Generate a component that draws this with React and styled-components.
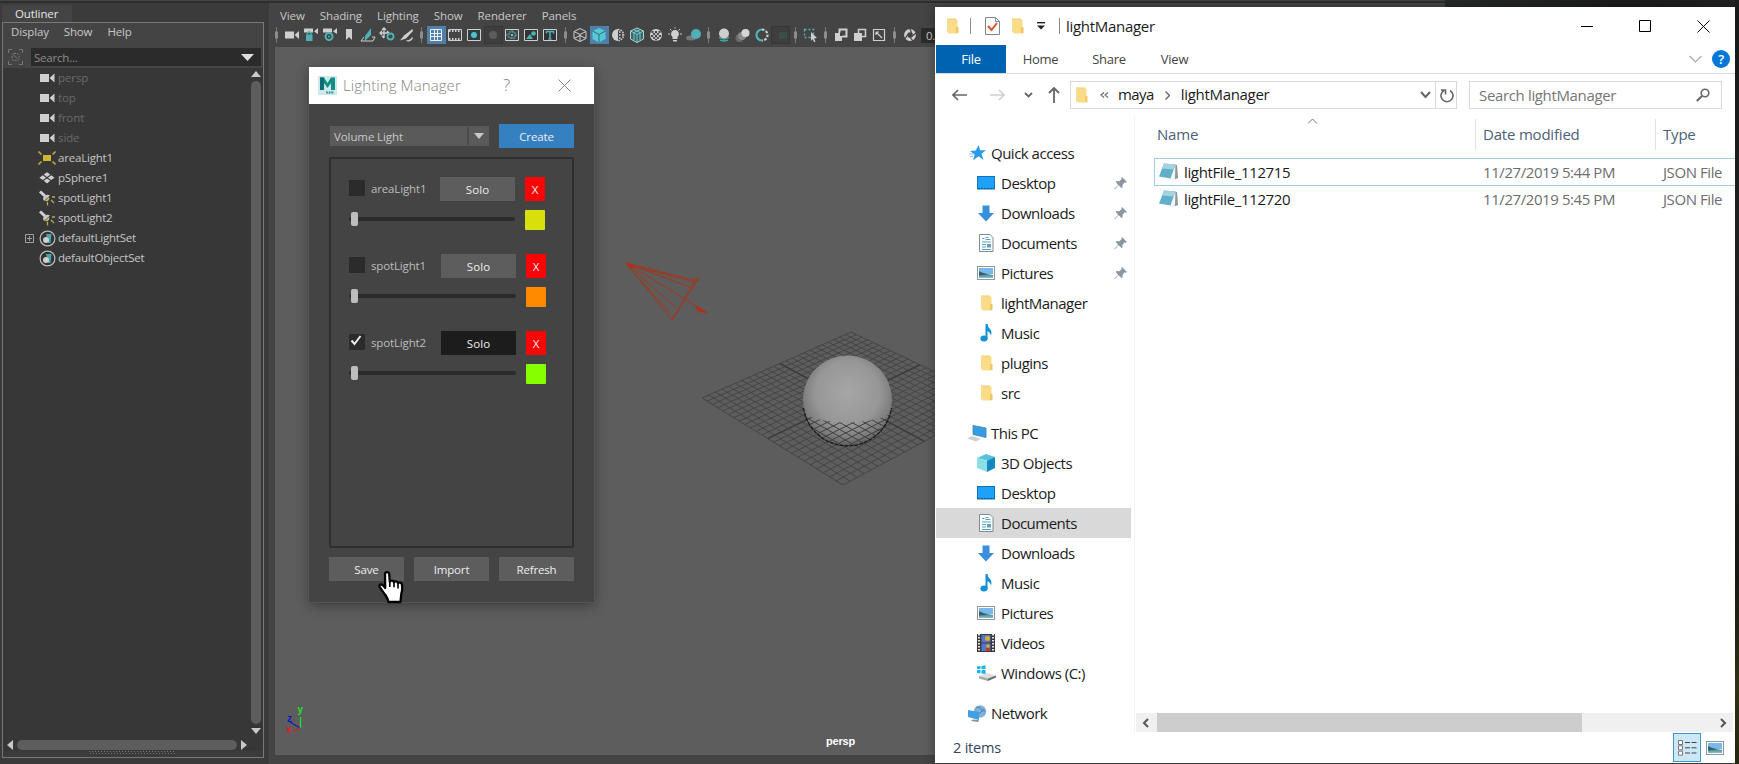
import React from "react";
import styled, { createGlobalStyle, css } from "styled-components";

const GlobalStyle = createGlobalStyle`
  * { box-sizing: border-box; }
  body { margin: 0; background: #3b3b3b; overflow: hidden; }
  svg { display: block; flex: none; }
`;

const Desktop = styled.div`
  position: relative;
  width: 1739px;
  height: 764px;
  display: flex;
  flex-direction: column;
  overflow: hidden;
  background: #3b3b3b;
  color: #c8c8c8;
  font: 11.5px/16px "Open Sans", "Noto Sans", sans-serif;
  letter-spacing: -0.3px;
  white-space: nowrap;
`;
const TopEdge = styled.div`
  height: 3px;
  flex: none;
  background: #444;
  border-bottom: 2px solid #2e2e2e;
`;
const Workspace = styled.div`
  flex: 1;
  display: flex;
  gap: 5px;
  min-height: 0;
`;

/* ---------- Outliner ---------- */
const OutlinerDock = styled.div`
  width: 264px;
  padding: 2px 0 6px 2px;
  display: flex;
  flex-direction: column;
`;
const DockTab = styled.div`
  width: 70px;
  height: 17px;
  padding-left: 13px;
  background: #444;
  color: #e6e6e6;
  line-height: 18px;
  letter-spacing: -0.1px;
`;
const OutlinerPanel = styled.div`
  flex: 1;
  display: flex;
  flex-direction: column;
  border: 1px solid #787878;
  background: #373737;
  min-height: 0;
`;
const OutlinerHead = styled.div`
  background: #444;
  height: 45px;
`;
const OutlinerMenus = styled.div`
  display: flex;
  gap: 15px;
  padding: 1px 0 0 8px;
  height: 25px;
  letter-spacing: -0.15px;
`;
const SearchLine = styled.div`
  display: flex;
  align-items: center;
  gap: 8px;
  padding-left: 5px;
`;
const SearchField = styled.div`
  width: 230px;
  height: 18px;
  padding: 0 7px 0 3px;
  display: flex;
  align-items: center;
  justify-content: space-between;
  background: #2b2b2b;
  color: #8c8c8c;
  letter-spacing: -0.2px;
`;
const SearchHint = styled.span`
  padding-top: 2px;
`;
const OutlinerBody = styled.div`
  flex: 1;
  display: flex;
  min-height: 0;
`;
const Tree = styled.div`
  flex: 1;
`;
const TreeRow = styled.div`
  height: 20px;
  display: flex;
  align-items: center;
  padding-left: 22px;
  color: ${(p) => (p.$dim ? "#6a6a6a" : "#c6c6c6")};
  letter-spacing: ${(p) => (p.$dim ? "-0.1px" : "-0.2px")};
`;
const Expander = styled.div`
  width: 12px;
`;
const TreeIcon = styled.div`
  width: 20px;
  margin-right: 1px;
  display: flex;
  justify-content: center;
`;
const VBar = styled.div`
  width: 12px;
  display: flex;
  flex-direction: column;
  align-items: center;
  padding: 3px 2px 4px 0;
  gap: 4px;
`;
const VThumb = styled.div`
  flex: 1;
  width: 10px;
  border-radius: 5px;
  background: #5d5d5d;
`;
const HBar = styled.div`
  height: 13px;
  display: flex;
  align-items: center;
  gap: 4px;
  padding-left: 4px;
`;
const HThumb = styled.div`
  width: 220px;
  height: 10px;
  border-radius: 5px;
  background: #5d5d5d;
`;
const Grip = styled.div`
  height: 6px;
  background: #3b3b3b;
  display: flex;
  justify-content: center;
  padding-right: 2px;
`;

/* ---------- Viewport ---------- */
const ViewPanel = styled.div`
  flex: 1;
  display: flex;
  flex-direction: column;
  background: #444;
  border-top: 1px solid #484848;
`;
const ViewMenus = styled.div`
  height: 21px;
  display: flex;
  gap: 15px;
  padding: 4px 0 0 11px;
  letter-spacing: -0.1px;
`;
const Toolbar = styled.div`
  height: 22px;
  display: flex;
  align-items: center;
  padding: 0 0 2px 2px;
`;
const Tool = styled.div`
  width: 19px;
  height: 18px;
  display: flex;
  align-items: center;
  justify-content: center;
  ${(p) => p.$on && css`background: #4f80aa;`}
  ${(p) => p.$off && css`background: #3e3e3e; border: 1px solid #363636;`}
`;
const ToolSep = styled.div`
  width: ${(p) => p.$w || 11}px;
  display: flex;
  justify-content: center;
`;
const NumField = styled.div`
  width: 40px;
  height: 15px;
  margin-left: 2px;
  padding-left: 5px;
  line-height: 15px;
  background: #2b2b2b;
`;
const Canvas = styled.div`
  flex: 1;
  margin: 0 0 9px 6px;
  background: #5d5d5d;
`;

/* ---------- Lighting manager dialog ---------- */
const Dialog = styled.div`
  position: absolute;
  left: 309px;
  top: 67px;
  width: 285px;
  height: 535px;
  display: flex;
  flex-direction: column;
  background: #444;
  box-shadow: 0 0 0 1px #555, 0 3px 12px rgba(0, 0, 0, 0.4);
`;
const DialogTitle = styled.div`
  height: 37px;
  display: flex;
  align-items: center;
  padding-left: 9px;
  background: #fff;
  color: #858585;
  font-size: 15px;
  font-weight: 300;
`;
const TitleText = styled.div`
  width: 158px;
  margin-left: 6px;
  padding-bottom: 1px;
  letter-spacing: 0.1px;
`;
const TitleHelp = styled.div`
  width: 55px;
  font-size: 17px;
  margin-left: 2px;
  padding-bottom: 1px;
`;
const DialogBody = styled.div`
  flex: 1;
  padding: 20px 20px 0;
  display: flex;
  flex-direction: column;
`;
const CreateLine = styled.div`
  display: flex;
  align-items: center;
  justify-content: space-between;
  padding-left: 1px;
`;
const Combo = styled.div`
  width: 159px;
  height: 20px;
  display: flex;
  align-items: center;
  background: #5a5a5a;
  letter-spacing: 0;
`;
const ComboText = styled.div`
  width: 139px;
  padding: 2px 0 0 4px;
  border-right: 2px solid #4a4a4a;
  letter-spacing: -0.1px;
`;
const ComboArrow = styled.div`
  flex: 1;
  display: flex;
  justify-content: center;
`;
const Button = styled.div`
  width: ${(p) => p.$w || 75}px;
  height: 24px;
  display: flex;
  align-items: center;
  justify-content: center;
  padding-top: 2px;
  background: ${(p) => p.$bg || "#5d5d5d"};
  color: #eee;
  letter-spacing: ${(p) => p.$ls || "-0.15px"};
`;
const LightBox = styled.div`
  height: 391px;
  margin-top: 9px;
  padding: 18px 0 0 18px;
  display: flex;
  flex-direction: column;
  gap: 24px;
  border: 2px solid #2f2f2f;
  border-radius: 2px;
`;
const LightItem = styled.div`
  display: grid;
  grid-template-columns: ${(p) => (p.$wide ? 92 : 91)}px 75px 20px;
  column-gap: 0;
  row-gap: 9px;
  align-items: center;
`;
const LightLabel = styled.div`
  display: flex;
  align-items: center;
  gap: 6px;
  color: #bdbdbd;
  letter-spacing: -0.15px;
`;
const CheckBox = styled.div`
  width: 16px;
  height: 16px;
  margin-top: -2px;
  padding: 1px 0 0 1px;
  background: #2b2b2b;
`;
const DeleteCell = styled.div`
  padding-left: 10px;
`;
const SliderCell = styled.div`
  grid-column: 1 / 3;
  display: flex;
  align-items: center;
  height: 4px;
  border-radius: 2px;
  margin-top: -2px;
  background: #2b2b2b;
`;
const SliderHandle = styled.div`
  width: 7px;
  height: 14px;
  margin-left: 2px;
  border-radius: 2px;
  background: #bdbdbd;
`;
const Swatch = styled.div`
  width: 20px;
  height: 20px;
  border-radius: 1px;
  background: ${(p) => p.$c};
`;
const DialogButtons = styled.div`
  display: flex;
  gap: 10px;
  margin-top: 9px;
`;
const Cursor = styled.div`
  position: absolute;
  left: 378px;
  top: 570px;
`;

/* ---------- Wallpaper slivers ---------- */
const WallTop = styled.div`
  position: absolute;
  left: 1445px;
  top: 0;
  width: 294px;
  height: 7px;
  background: linear-gradient(90deg, #262a2c, #1c1c1c 60%, #232323);
`;
const WallSide = styled.div`
  position: absolute;
  left: 1735px;
  top: 0;
  width: 4px;
  height: 764px;
  background: linear-gradient(#1d1d1d, #262626 45%, #1c1c14 75%, #39371a 90%, #2a2a12);
`;

/* ---------- Explorer ---------- */
const Explorer = styled.div`
  position: absolute;
  left: 935px;
  top: 7px;
  width: 800px;
  height: 756px;
  display: flex;
  flex-direction: column;
  background: #fff;
  color: #1b1b1b;
  font-size: 15px;
  line-height: 20px;
  letter-spacing: -0.4px;
  box-shadow: 0 0 10px rgba(0, 0, 0, 0.35);
`;
const TitleBar = styled.div`
  height: 38px;
  display: flex;
  align-items: center;
  padding: 0 25px 0 11px;
`;
const TitleDivider = styled.div`
  width: 1px;
  height: 16px;
  margin: 0 ${(p) => p.$r}px 0 ${(p) => p.$l}px;
  background: #8a8a8a;
`;
const TitleName = styled.div`
  flex: 1;
  letter-spacing: -0.3px;
`;
const WinControls = styled.div`
  display: flex;
  align-items: center;
  gap: 46px;
`;
const Ribbon = styled.div`
  height: 29px;
  display: flex;
  align-items: center;
  padding: 0 5px 0 1px;
  border-bottom: 1px solid #d9dadb;
  font-size: 13px;
  color: #444;
  letter-spacing: -0.25px;
`;
const RibbonTab = styled.div`
  width: ${(p) => p.$w}px;
  height: 28px;
  line-height: 28px;
  text-align: center;
  ${(p) => p.$file && css`background: #0063b1; color: #fff;`}
`;
const RibbonRight = styled.div`
  margin-left: auto;
  display: flex;
  align-items: center;
  gap: 10px;
`;
const HelpDot = styled.div`
  width: 18px;
  height: 18px;
  border-radius: 50%;
  background: #0078d7;
  color: #fff;
  text-align: center;
  line-height: 18px;
  font-weight: 600;
`;
const AddressLine = styled.div`
  height: 42px;
  display: flex;
  align-items: center;
  padding: 0 13px 0 17px;
`;
const NavArrows = styled.div`
  width: 118px;
  display: flex;
  align-items: center;
`;
const Gap = styled.div`
  width: ${(p) => p.$w}px;
`;
const AddressBox = styled.div`
  width: 387px;
  height: 28px;
  display: flex;
  align-items: center;
  border: 1px solid #d9d9d9;
  padding-left: 4px;
`;
const Crumb = styled.div`
  margin-left: ${(p) => p.$l}px;
  padding-bottom: ${(p) => (p.$up ? 2 : 0)}px;
  letter-spacing: ${(p) => p.$ls || "-0.3px"};
`;
const AddressEnd = styled.div`
  margin-left: auto;
  height: 26px;
  display: flex;
  align-items: center;
`;
const RefreshCell = styled.div`
  width: 21px;
  height: 26px;
  margin-left: 4px;
  display: flex;
  align-items: center;
  justify-content: flex-end;
  padding-right: 2px;
  border-left: 1px solid #d9d9d9;
`;
const SearchBox = styled.div`
  width: 253px;
  height: 28px;
  margin-left: 12px;
  padding: 0 11px 0 9px;
  display: flex;
  align-items: center;
  justify-content: space-between;
  border: 1px solid #d9d9d9;
  color: #767676;
  letter-spacing: -0.35px;
`;
const Panes = styled.div`
  flex: 1;
  display: flex;
  min-height: 0;
`;
const NavPane = styled.div`
  width: 200px;
  padding: 22px 3px 0 1px;
  border-right: 1px solid #f3f3f3;
`;
const NavRow = styled.div`
  height: 30px;
  display: flex;
  align-items: center;
  gap: ${(p) => (p.$root ? 4 : 5)}px;
  padding-left: ${(p) => (p.$root ? 31 : 40)}px;
  margin-top: ${(p) => (p.$gap ? 10 : 0)}px;
  background: ${(p) => (p.$sel ? "#d9d9d9" : "none")};
  letter-spacing: -0.5px;
`;
const NavIcon = styled.div`
  width: 20px;
  display: flex;
  justify-content: center;
`;
const NavLabel = styled.div`
  flex: 1;
`;
const PinSlot = styled.div`
  width: 17px;
`;
const ListPane = styled.div`
  flex: 1;
  display: flex;
  flex-direction: column;
  padding-left: 1px;
`;
const ColumnHeads = styled.div`
  height: 42px;
  display: grid;
  grid-template-columns: 340px 180px 78px;
  color: #4c607a;
  letter-spacing: -0.2px;
`;
const ColumnHead = styled.div`
  height: 31px;
  margin-top: 3px;
  padding: 5px 0 0 ${(p) => p.$l}px;
  border-right: ${(p) => (p.$last ? "none" : "1px solid #e2e2e2")};
`;
const HeadName = styled(ColumnHead)`
  position: relative;
`;
const SortMark = styled.div`
  position: absolute;
  left: 171px;
  top: -1px;
`;
const FileRow = styled.div`
  height: ${(p) => (p.$sel ? 28 : 27)}px;
  margin-left: 18px;
  display: grid;
  grid-template-columns: 25px 299px 180px 70px;
  align-items: center;
  border: 1px solid ${(p) => (p.$sel ? "#9fcde3" : "transparent")};
  border-right: none;
  padding-left: 4px;
  font-size: 15px;
  letter-spacing: -0.36px;
  margin-top: ${(p) => (p.$sel ? 0 : -1)}px;
`;
const FileMeta = styled.div`
  color: #6d6d6d;
  letter-spacing: -0.42px;
`;
const ListFill = styled.div`
  flex: 1;
`;
const ScrollTrack = styled.div`
  height: 19px;
  margin: 0 2px 1px 0;
  display: flex;
  align-items: center;
  justify-content: space-between;
  background: #f0f0f0;
  padding: 0 6px 0 6px;
`;
const ScrollLeft = styled.div`
  display: flex;
  align-items: center;
  gap: 8px;
`;
const ScrollThumb = styled.div`
  width: 425px;
  height: 19px;
  background: #cdcdcd;
`;
const StatusBar = styled.div`
  height: 30px;
  display: flex;
  align-items: center;
  justify-content: space-between;
  padding: 0 11px 1px 18px;
  color: #30475f;
  font-size: 14.5px;
  letter-spacing: -0.2px;
`;
const ViewButtons = styled.div`
  display: flex;
  align-items: center;
  gap: 5px;
`;
const DetailsButton = styled.div`
  width: 28px;
  height: 29px;
  display: flex;
  align-items: center;
  justify-content: center;
  border: 1px solid #3c99c4;
  background: #cce8f6;
`;

/* ---------- Icons ---------- */
const G = "#cfcfcf";
const T = "#4fb0b5";

const Tri = ({ d, w, h, c = "#c8c8c8" }) => (
  <svg width={w} height={h}><path d={d} fill={c} /></svg>
);
const CameraGlyph = () => (
  <svg width="15" height="10"><path d="M0 1h9v8H0z M14.5 0.5v9l-5-4.5z" fill={G} /></svg>
);
const AreaGlyph = () => (
  <svg width="18" height="14" viewBox="0 0 18 14">
    <rect x="5" y="4" width="8" height="6" fill="#cdb832" />
    <path d="M0.5 0.5l3 3M17.5 0.5l-3 3M0.5 13.5l3-3M17.5 13.5l-3-3" stroke="#b8a840" strokeWidth="1.6" />
  </svg>
);
const MeshGlyph = () => (
  <svg width="16" height="12" viewBox="0 0 16 12" fill="#cfcfcf">
    <path d="M8 0.2l3.3 2.4L8 5 4.700 2.600z M3.800 3.300l3.300 2.400-3.300 2.400L.4 5.700z M12.200 3.300l3.300 2.400-3.300 2.400-3.300-2.400z M8 6.400l3.300 2.400L8 11.500 4.700 8.800z" />
  </svg>
);
const SpotGlyph = () => (
  <svg width="17" height="16" viewBox="0 0 17 16">
    <path d="M1 1.500l5 4.500" stroke="#d2d2d2" strokeWidth="3" />
    <path d="M5 11L11 5.500a4.500 4.500 0 0 0-5 0 4 4 0 0 0-1 5.500z" fill="#c9c9c9" />
    <path d="M10 7a3 3 0 0 1-4 4z" fill="#cfc060" />
    <path d="M13 7h3M12 10l3 3M8.500 12v3.500" stroke="#b5a860" strokeWidth="1.300" />
  </svg>
);
const SetGlyph = () => (
  <svg width="17" height="17" viewBox="0 0 17 17">
    <circle cx="8.500" cy="8.500" r="7.400" fill="#333" stroke="#bcbcbc" strokeWidth="1.200" />
    <path d="M7 4h5.500l-1 9H9z" fill="#45a5ad" />
    <circle cx="7" cy="10" r="3" fill="#cfcfcf" />
  </svg>
);
const PlusBox = () => (
  <svg width="9" height="9"><path d="M.5.5h8v8h-8z M2 4.500h5M4.500 2v5" fill="none" stroke="#a0a0a0" /></svg>
);
const FilterGlyph = () => (
  <svg width="15" height="16" viewBox="0 0 15 16" fill="none" stroke="#777">
    <path d="M.5 4V.500H4M11 .500h3.500V4M.5 12v3.500H4M11 15.500h3.500V12" />
    <rect x="4" y="4.500" width="7" height="7" rx="2" strokeDasharray="2 1" />
    <path d="M5.500 6l4 4" />
  </svg>
);
const SepGlyph = () => (
  <svg width="3" height="16"><path d="M1.500 0v16" stroke="#777" /><path d="M0 4.500h3v7H0z" fill="#8c8c8c" /></svg>
);
const toolArt = {
  cam: <path d="M1 4.500h9v7H1z M15 4v8l-4.500-4z" fill={G} />,
  camLock: <g><path d="M1 1.500h9v4H1z M15 1v6l-4-2.500z" fill={G} /><rect x="3" y="7.500" width="6.500" height="6.500" fill={T} /><path d="M4.500 7.500V6q1.700-2.500 3.500 0v1.500" fill="none" stroke={T} strokeWidth="1.500" /></g>,
  camGear: <g><path d="M1 1.500h9v4H1z M15 1v6l-4-2.500z" fill={G} /><circle cx="7" cy="9.500" r="3.500" fill="#444" stroke={T} strokeWidth="2" /><circle cx="7" cy="9.500" r="1" fill={T} /></g>,
  mark: <path d="M5 2h6v11L8 10l-3 3z" fill={G} />,
  plane: <g><path d="M5 9l6-8v7l-6 6z" fill={T} /><path d="M1 14l3-4M1 14h12l2-4h-3" stroke={G} fill="none" /></g>,
  pan: <g><path d="M5 1v10M1 6h9M3 3l2-2 2 2M3 9l2 2M3 4L1 6l2 2M8 4l2 2" stroke={G} fill="none" strokeWidth="1.300" /><circle cx="11.500" cy="9.500" r="3" stroke={T} strokeWidth="1.800" fill="none" /></g>,
  brush: <g><path d="M14.500 2L6 8.500 2 13.500l6-2L15 4z" fill={G} /><path d="M8.500 13.500q4 1.500 6-3" stroke={G} fill="none" strokeWidth="1.300" /></g>,
  grid: <path d="M2.500 2.500h11v11h-11z M6.500 2.500v11M9.500 2.500v11M2.500 6.500h11M2.500 9.500h11" fill="none" stroke="#eee" />,
  film: <g fill="none" stroke={G}><path d="M1.500 2.500h13v11h-13z" /><path d="M2 4h13M2 12h13" strokeDasharray="1.500 1.500" strokeWidth="2" /></g>,
  gate: <g><path d="M1.500 2.500h13v11h-13z" fill="#2f3c40" stroke={G} /><circle cx="8" cy="8" r="3" fill="#53c0d0" /></g>,
  ball: <circle cx="8" cy="8" r="4" fill="#5c5c5c" />,
  field: <g fill="none"><path d="M1.500 2.500h13v11h-13z" stroke={G} /><path d="M8 3v3M8 10v3M2 8h3M11 8h3M5 5h6v6H5z" stroke={T} strokeDasharray="2 1" /><circle cx="8" cy="8" r="1" fill={G} /></g>,
  image: <g><path d="M1.500 2.500h13v11h-13z" fill="#333" stroke={G} /><path d="M3 12l4-5 3 5z" fill={T} /><circle cx="10.500" cy="6.500" r="2.300" fill={T} /></g>,
  text: <g><path d="M1.500 2.500h13v11h-13z" fill="#333" stroke={G} /><path d="M4.500 6.500V4.500h7v2M8 4.500v7.500M6.500 12h3" stroke={T} strokeWidth="1.600" fill="none" /></g>,
  wire: <path d="M8 1.500l6 3v7l-6 3-6-3v-7z M2 4.500l6 3 6-3M8 7.500v7M2 11.500l6-3 6 3" fill="none" stroke={G} />,
  cube: <g><path d="M8 1l6.500 3v8L8 15.500 1.500 12V4z" fill="#55c8d4" /><path d="M1.500 4L8 7.500 14.500 4M8 7.500v8" stroke="#2b6f86" fill="none" /></g>,
  half: <g><path d="M8 2a6 6 0 0 0 0 12z" fill={G} /><path d="M8 2.500a5.500 5.500 0 0 1 0 11" fill="none" stroke={G} strokeDasharray="1.500 1" strokeWidth="1.600" /><path d="M9 5h3M9 8h4M9 11h3" stroke={G} strokeDasharray="1.500 1.500" strokeWidth="1.500" /></g>,
  wireCube: <g><path d="M8 1l6.500 3v8L8 15.500 1.500 12V4z" fill="#39656b" stroke="#bcd0d2" /><path d="M1.500 4L8 7.500 14.500 4M8 7.500v8M4.500 2.500l6.500 3v8M11.500 2.500L5 5.500v8" stroke="#7cc" fill="none" /></g>,
  tex: <g><circle cx="8" cy="8" r="6" fill={G} /><path d="M3.500 4h2v2h-2z M7 4h2v2H7z M10.500 4h2v2h-2z M5.200 6h2v2h-2z M8.800 6h2v2h-2z M3 8h2.200v2H3z M7 8h2v2H7z M10.800 8H13v2h-2.200z M5.200 10h2v2h-2z M8.800 10h2v2h-2z M7 12h2v1.500H7z" fill="#444" /></g>,
  bulb: <g><path d="M5.500 10a4 4 0 1 1 5 0v2h-5z M6 13h4v1.500H6z" fill={G} /><path d="M1 7h2M13 7h2M3 2l1.500 1.500M13 2l-1.500 1.500M8 0v1.500" stroke={G} /></g>,
  shadow: <g><ellipse cx="5" cy="11" rx="5" ry="2.500" fill="#777" /><circle cx="10" cy="7" r="5" fill={T} /></g>,
  ao: <g><circle cx="8" cy="6.500" r="5" fill={G} /><path d="M3 10q5 4 10 0M4 13q4 2 8 0" stroke={T} fill="none" strokeWidth="1.300" /></g>,
  blur: <g><circle cx="4.500" cy="11" r="4" fill="#6a6a6a" /><circle cx="7" cy="9" r="4" fill="#8a8a8a" /><circle cx="10.500" cy="6" r="4" fill="#d6d6d6" /></g>,
  aa: <g fill="none" strokeWidth="2.200"><path d="M8 2.500a5.500 5.500 0 1 0 0 11" stroke={T} /><path d="M8 2.500a5.500 5.500 0 0 1 0 11" stroke="#d0d0d0" strokeDasharray="2.500 1.500" /></g>,
  dof: <rect x="6" y="5" width="8" height="7" fill="#3a4c4c" />,
  select: <g><path d="M1.500 2.500h9v8h-9z" fill="none" stroke={T} strokeDasharray="2 2" strokeWidth="1.400" /><path d="M8 5l6 6-3 .5 1.500 3-1.500.5-1.500-3L8 14z" fill={G} /></g>,
  stackA: <g><path d="M6.500 2.500h7v7h-7z" fill="none" stroke={G} strokeWidth="2" /><path d="M2 6h7v8H2z" fill={G} /><path d="M7 5.500h2.500V9H7z" fill="#444" /></g>,
  stackB: <g><path d="M6.500 2.500h7v7h-7z" fill="none" stroke={G} strokeWidth="1.500" /><path d="M2 6h8v8H2z" fill={G} /></g>,
  frame: <path d="M2.500 2.500h11v11h-11z M5 5l6 6M5 5v3M5 5h3" fill="none" stroke={G} strokeWidth="1.200" />,
  shutter: <g><circle cx="8" cy="8" r="4.300" fill="none" stroke={G} strokeWidth="3.200" /><path d="M8 2l2 5M14 6l-5 4M11 14L7 9M3 12l3-5" stroke="#444" strokeWidth="1.200" /></g>,
};
const toolGroups = [
  { sep: 11.5, items: ["cam", "camLock", "camGear", "mark", "plane", "pan", "brush"] },
  { sep: 11, items: ["grid", "film", "gate", "ball", "field", "image", "text"] },
  { sep: 11, items: ["wire", "cube", "half", "wireCube", "tex", "bulb", "shadow"] },
  { sep: 10.5, items: ["ao", "blur", "aa", "dof"] },
  { sep: 11, items: ["select"] },
  { sep: 11, items: ["stackA", "stackB", "frame"] },
  { sep: 12, items: ["shutter"] },
];
const ON = { grid: true, cube: true };
const OFF = { ball: true, dof: true };

const FolderGlyph = ({ h = 16 }) => (
  <svg width="13" height={h} viewBox="0 0 13 16">
    <path d="M1 .5h9v12H1z" fill="#f0cb6c" />
    <path d="M3 1.500h8.500v14H3z" fill="#fadc88" />
    <path d="M1 .5h2v15L1 14z" fill="#f7dc91" />
    <path d="M10 9h2.500v6H10z" fill="#eec865" />
  </svg>
);
const PropGlyph = () => (
  <svg width="15" height="18" viewBox="0 0 15 18">
    <path d="M.5.500h10l4 4v13H.5z" fill="#fbfbfb" stroke="#7b8793" />
    <path d="M10.500.5v4h4" fill="none" stroke="#7b8793" />
    <path d="M3 9l3.500 4L12 6" fill="none" stroke="#d9532c" strokeWidth="2" />
  </svg>
);
const DesktopGlyph = () => (
  <svg width="18" height="14"><rect x=".5" y=".5" width="17" height="12.500" fill="#1ea1f8" stroke="#1272b8" /><path d="M1 12.500h16" stroke="#0d5f9c" strokeDasharray="2 1" /></svg>
);
const DownGlyph = () => (
  <svg width="16" height="17"><path d="M4.500.5h7v7.500H16L8 16.500 0 8h4.500z" fill="#3a8fdd" /></svg>
);
const DocGlyph = () => (
  <svg width="15" height="18" viewBox="0 0 15 18">
    <path d="M.5.500h10.500l3 3v14H.5z" fill="#fff" stroke="#848b90" />
    <path d="M3 4.500h2.500M6.500 3.500h3M6.500 5.500h5M3 8h9M3 10.500h4M3 13h4M3 15.500h9" stroke="#4fa3c8" />
    <path d="M8 10h4v3.500H8z" fill="#6f9cb4" />
  </svg>
);
const PictureGlyph = ({ w = 18 }) => (
  <svg width={w} height="14" viewBox="0 0 18 14">
    <rect x=".5" y=".5" width="17" height="13" fill="#fff" stroke="#8d979e" />
    <path d="M2 2h14v6H2z" fill="#7ab8ec" />
    <path d="M2 6l5 1 4 1 5 1v3H2z" fill="#5b9a97" />
    <path d="M2 5q5 3 9 3.500L2 9.500z" fill="#35606b" />
    <path d="M2 10.500h14v1.500H2z" fill="#7fb6d8" />
  </svg>
);
const MusicGlyph = () => (
  <svg width="12" height="18" viewBox="0 0 12 18"><ellipse cx="4" cy="14.500" rx="3.600" ry="2.900" fill="#1490d8" /><path d="M5.500 0h2q.3 3 2.500 5t1 6.500q-.5-3-3.500-4.500V15h-2z" fill="#1490d8" /></svg>
);
const StarGlyph = () => (
  <svg width="17" height="16" viewBox="0 0 17 16"><path d="M9.500 0l1.700 5.200H17l-4.500 3.500 2 6.300-5-3.700L4 15.500l1.700-6L1 6l5.800-.5z" fill="#2c9be6" /><path d="M0 9h4M1 11.500h3" stroke="#7cc4f3" /></svg>
);
const PcGlyph = () => (
  <svg width="20" height="17" viewBox="0 0 20 17"><path d="M6 .5l13 2.500v9.500L6 9.500z" fill="#2f9fea" stroke="#5c7990" strokeWidth=".8" /><path d="M0 13.500l5-2.500 9 3-5 2.500z" fill="#ccd1d6" /></svg>
);
const CubeGlyph = () => (
  <svg width="18" height="18" viewBox="0 0 18 18"><path d="M9 0l9 3-7 4-11-3z" fill="#57c3dc" /><path d="M0 4l10 3v11L0 14z" fill="#8adfe9" /><path d="M10 7l8-4v11l-8 4z" fill="#1487bf" /></svg>
);
const VideoGlyph = () => (
  <svg width="18" height="18" viewBox="0 0 18 18">
    <rect width="18" height="18" fill="#3a3a3a" /><path d="M2 0v18M16 0v18" stroke="#e8e8e8" strokeWidth="2" strokeDasharray="1.500 1.500" />
    <path d="M4.500 1h9v7.500h-9z" fill="#5277d4" /><path d="M4.500 9.500h9V17h-9z" fill="#5277d4" />
    <circle cx="10.500" cy="4.500" r="2.500" fill="#d7b12c" /><path d="M9 8l3-1-1 2z M9 14h4v3H9z" fill="#c23b22" /><circle cx="11" cy="12" r="1.800" fill="#d7b12c" />
  </svg>
);
const DriveGlyph = () => (
  <svg width="19" height="16" viewBox="0 0 19 16"><path d="M2 11l8-3 9 2.500-8 3z" fill="#dedede" /><path d="M2 11l9 2.500V16L2 13.500z" fill="#a8a8a8" /><path d="M11 13.500l8-3v2L11 16z" fill="#6d6d6d" /><path d="M0 1.500l3.500-.5v3H0z M4.500 1L8.500.3V4h-4z M0 5h3.500v3.300L0 8z M4.500 5h4v4l-4-.6z" fill="#17b5e6" /></svg>
);
const NetGlyph = () => (
  <svg width="19" height="17" viewBox="0 0 19 17"><circle cx="12" cy="6.500" r="6.200" fill="#7fb0d8" /><path d="M8 3q4-2 5 1t4 2M10 10l6-6" stroke="#4a82b8" fill="none" /><path d="M0 5l11 2v8L0 12z" fill="#3f9fe2" /><path d="M5 14.500l6 .5-1 2-7-1z" fill="#7b94a8" /></svg>
);
const PinGlyph = () => (
  <svg width="14" height="14" viewBox="0 0 14 14"><path d="M8 1l5 5-1.500.7-1-.4L8.500 9l0 2.500L7.500 12 4.700 9.300 1 13l-.7.200.2-.7L4.200 9 1.800 6l.7-1 2.700.2L7.800 3 7.300 2z" fill="#8a97a2" /></svg>
);
const NoteGlyph = () => (
  <svg width="19" height="18" viewBox="0 0 19 18">
    <path d="M16 1l2 1 1 13-6 2.500-3-2z" fill="#e3e7e9" />
    <path d="M16.500 2L18 2l1 13-3 1.200z" fill="#8b979d" />
    <path d="M5 .5l11.500 1L11.500 15.500 0 13.500z" fill="#62afc9" />
    <path d="M5 .5l11.500 1-1.800 5L3 5.500z" fill="#a3d3df" />
    <path d="M11.500 15.500L16 4l-.5 12.500-2.500 1z" fill="#f2f4f5" />
  </svg>
);
const MayaGlyph = () => (
  <svg width="19" height="19" viewBox="0 0 19 19">
    <rect width="19" height="19" fill="#cfe8ea" />
    <path d="M2 14V1.500h4L9.500 7 13 1.500h4V14h-4V7l-3.500 5L6 7v7z" fill="#0f8f88" />
    <path d="M2 1.500l4 0L6 14H2z" fill="#0b6e74" />
    <path d="M8 16.500h8" stroke="#3a9ea0" strokeWidth="2" strokeDasharray="2 .6" />
  </svg>
);
const HandGlyph = () => (
  <svg width="28" height="34" viewBox="0 0 28 34">
    <path d="M7 4c0-2.600 4-2.600 4.200 0l.6 8c.4-2.100 4-1.900 4.200.4.600-1.600 3.800-1.200 4 .9.700-1.300 3.700-.8 3.900 1.200.6 3.200.4 6.300-.6 9.300L22.500 32H10.500c-.5-2.500-1.300-4.200-2.800-6.500-2.300-3.200-4.200-5.400-5.900-8.300-1-1.700.4-3.100 2-2.500 1.600.6 2.500 1.800 3.400 3.300z" fill="#fff" stroke="#000" strokeWidth="2.300" strokeLinejoin="round" />
    <path d="M11.800 12v5M16 12.800v4.500M20 14v4.500" stroke="#000" strokeWidth="1.600" />
  </svg>
);

/* ---------- 3D scene ---------- */
const corners = { a: [701, 398], b: [850, 332], c: [997, 402], d: [842, 485] };
function project(u, v) {
  const [x0, y0] = corners.a, [x1, y1] = corners.b, [x2, y2] = corners.c, [x3, y3] = corners.d;
  const dx1 = x1 - x2, dx2 = x3 - x2, dx3 = x0 - x1 + x2 - x3;
  const dy1 = y1 - y2, dy2 = y3 - y2, dy3 = y0 - y1 + y2 - y3;
  const det = dx1 * dy2 - dx2 * dy1;
  const g = (dx3 * dy2 - dx2 * dy3) / det;
  const h = (dx1 * dy3 - dx3 * dy1) / det;
  const w = g * u + h * v + 1;
  const x = ((x1 - x0 + g * x1) * u + (x3 - x0 + h * x3) * v + x0) / w;
  const y = ((y1 - y0 + g * y1) * u + (y3 - y0 + h * y3) * v + y0) / w;
  return `${x.toFixed(1)} ${y.toFixed(1)}`;
}
const DIVS = 24;
let thin = "";
for (let i = 0; i <= DIVS; i++) {
  const t = i / DIVS;
  thin += `M${project(t, 0)}L${project(t, 1)}M${project(0, t)}L${project(1, t)}`;
}
const axes = `M${project(0.5, 0)}L${project(0.5, 1)}M${project(0, 0.5)}L${project(1, 0.5)}`;

const Scene = () => (
  <svg width="661" height="707" viewBox="274 47 661 707">
    <defs>
      <radialGradient id="ball" cx="0.5" cy="0.42" r="0.6">
        <stop offset="0" stopColor="#a6a6a6" />
        <stop offset="0.6" stopColor="#979797" />
        <stop offset="0.85" stopColor="#7c7c7c" />
        <stop offset="1" stopColor="#5c5c5c" />
      </radialGradient>
      <clipPath id="under"><path d="M801 412Q811 421 846 423Q881 421 891 412V450H801z" /></clipPath>
      <clipPath id="disc"><circle cx="846.500" cy="400" r="44.500" /></clipPath>
    </defs>
    <path d={thin} stroke="#434343" strokeWidth="0.900" fill="none" />
    <path d={axes} stroke="#3c3c3c" strokeWidth="1.600" fill="none" />
    <circle cx="846.500" cy="400" r="44.500" fill="url(#ball)" />
    <g clipPath="url(#disc)">
      <path d={thin} stroke="#404040" strokeWidth="1" fill="none" clipPath="url(#under)" />
    </g>
    <path d="M802.500 408A44.500 44.500 0 0 0 890.500 408" fill="none" stroke="#181818" strokeWidth="1.300" strokeDasharray="4 1" />
    <g stroke="#a5361c" fill="none" strokeWidth="1">
      <path d="M625 263L697 281M625 263L691 288M625 263L684 299M625 263L675 308M625 263L671 320M627 265L694 282M627 266L669 313" />
      <path d="M697 279L671 320M694 281L673 317M698 278L693 280M671 320L674 314" />
      <path d="M684 299L700 309" />
    </g>
    <path d="M624.500 262l8 3-3 3z M694 305l13.500 8-10.500-1z" fill="#b0301a" />
    <g strokeWidth="1.300" fill="none">
      <path d="M299.500 728V717" stroke="#22e022" />
      <path d="M299 728L289 722" stroke="#1c1cb0" />
      <path d="M299 728l-7 3" stroke="#c22" />
    </g>
    <g fontFamily="Liberation Sans, sans-serif" fontWeight="700" fontSize="10">
      <text x="296.500" y="713" fill="#22e022">y</text>
      <text x="286" y="722" fill="#1414c8">z</text>
      <text x="285" y="733" fill="#d81e1e">x</text>
      <text x="825" y="745" fill="#fff" fontSize="11" textLength="29">persp</text>
    </g>
  </svg>
);

/* ---------- Data ---------- */
const treeRows = [
  ["persp", CameraGlyph, true], ["top", CameraGlyph, true], ["front", CameraGlyph, true], ["side", CameraGlyph, true],
  ["areaLight1", AreaGlyph], ["pSphere1", MeshGlyph], ["spotLight1", SpotGlyph], ["spotLight2", SpotGlyph],
  ["defaultLightSet", SetGlyph, false, true], ["defaultObjectSet", SetGlyph],
];
const lights = [
  { name: "areaLight1", color: "#d8e00c" },
  { name: "spotLight1", color: "#ff8a00", wide: true },
  { name: "spotLight2", color: "#86ff00", wide: true, checked: true },
];
const navRows = [
  { label: "Quick access", icon: StarGlyph, root: true },
  { label: "Desktop", icon: DesktopGlyph, pin: true },
  { label: "Downloads", icon: DownGlyph, pin: true },
  { label: "Documents", icon: DocGlyph, pin: true },
  { label: "Pictures", icon: PictureGlyph, pin: true },
  { label: "lightManager", icon: FolderGlyph },
  { label: "Music", icon: MusicGlyph },
  { label: "plugins", icon: FolderGlyph },
  { label: "src", icon: FolderGlyph },
  { label: "This PC", icon: PcGlyph, root: true, gap: true },
  { label: "3D Objects", icon: CubeGlyph },
  { label: "Desktop", icon: DesktopGlyph },
  { label: "Documents", icon: DocGlyph, sel: true },
  { label: "Downloads", icon: DownGlyph },
  { label: "Music", icon: MusicGlyph },
  { label: "Pictures", icon: PictureGlyph },
  { label: "Videos", icon: VideoGlyph },
  { label: "Windows (C:)", icon: DriveGlyph },
  { label: "Network", icon: NetGlyph, root: true, gap: true },
];

const Stroke = ({ w, h, d, c = "#666", s = 2 }) => (
  <svg width={w} height={h}><path d={d} fill="none" stroke={c} strokeWidth={s} /></svg>
);

function Outliner() {
  return (
    <OutlinerDock>
      <DockTab>Outliner</DockTab>
      <OutlinerPanel>
        <OutlinerHead>
          <OutlinerMenus><span>Display</span><span>Show</span><span>Help</span></OutlinerMenus>
          <SearchLine>
            <FilterGlyph />
            <SearchField><SearchHint>Search...</SearchHint><Tri w={13} h={7} d="M0 0h13L6.500 7z" c="#ddd" /></SearchField>
          </SearchLine>
        </OutlinerHead>
        <OutlinerBody>
          <Tree>
            {treeRows.map(([name, Icon, dim, open]) => (
              <TreeRow key={name} $dim={dim}>
                <Expander>{open && <PlusBox />}</Expander>
                <TreeIcon><Icon /></TreeIcon>
                {name}
              </TreeRow>
            ))}
          </Tree>
          <VBar>
            <Tri w={10} h={6} d="M0 6h10L5 0z" />
            <VThumb />
            <Tri w={10} h={6} d="M0 0h10L5 6z" />
          </VBar>
        </OutlinerBody>
        <HBar>
          <Tri w={6} h={10} d="M6 0v10L0 5z" />
          <HThumb />
          <Tri w={6} h={10} d="M0 0v10l6-5z" />
        </HBar>
        <Grip>
          <svg width="86" height="4"><path d="M0 .5h86M1 2.500h86" stroke="#777" strokeDasharray="1 2" /></svg>
        </Grip>
      </OutlinerPanel>
    </OutlinerDock>
  );
}

function Viewport() {
  return (
    <ViewPanel>
      <ViewMenus>
        {["View", "Shading", "Lighting", "Show", "Renderer", "Panels"].map((m) => <span key={m}>{m}</span>)}
      </ViewMenus>
      <Toolbar>
        {toolGroups.map((g, i) => (
          <React.Fragment key={i}>
            <ToolSep $w={g.sep}><SepGlyph /></ToolSep>
            {g.items.map((k) => (
              <Tool key={k} $on={ON[k]} $off={OFF[k]}><svg width="16" height="16" viewBox="0 0 16 16">{toolArt[k]}</svg></Tool>
            ))}
          </React.Fragment>
        ))}
        <NumField>0.00</NumField>
      </Toolbar>
      <Canvas><Scene /></Canvas>
    </ViewPanel>
  );
}

function LightingManager() {
  return (
    <Dialog>
      <DialogTitle>
        <MayaGlyph />
        <TitleText>Lighting Manager</TitleText>
        <TitleHelp>?</TitleHelp>
        <Stroke w={13} h={13} d="M.5.5l12 12M12.500.5l-12 12" c="#888" s={1} />
      </DialogTitle>
      <DialogBody>
        <CreateLine>
          <Combo>
            <ComboText>Volume Light</ComboText>
            <ComboArrow><Tri w={10} h={6} d="M0 0h10L5 6z" /></ComboArrow>
          </Combo>
          <Button $bg="#3580c0">Create</Button>
        </CreateLine>
        <LightBox>
          {lights.map((l) => (
            <LightItem key={l.name} $wide={l.wide}>
              <LightLabel>
                <CheckBox>{l.checked && <Stroke w={12} h={11} d="M1.500 5.500l3 3.500L10.500 1" c="#eee" />}</CheckBox>
                {l.name}
              </LightLabel>
              <Button $bg={l.checked ? "#1c1c1c" : undefined} $ls="0.1px">Solo</Button>
              <DeleteCell><Button $w={20} $bg="#f80505">X</Button></DeleteCell>
              <SliderCell><SliderHandle /></SliderCell>
              <DeleteCell><Swatch $c={l.color} /></DeleteCell>
            </LightItem>
          ))}
        </LightBox>
        <DialogButtons><Button>Save</Button><Button>Import</Button><Button>Refresh</Button></DialogButtons>
      </DialogBody>
    </Dialog>
  );
}

function FileExplorer() {
  return (
    <Explorer>
      <TitleBar>
        <FolderGlyph />
        <TitleDivider $l={11} $r={14} />
        <PropGlyph />
        <Gap $w={11} />
        <FolderGlyph />
        <Gap $w={13} />
        <svg width="8" height="8"><path d="M0 .7h8" stroke="#222" strokeWidth="1.400" /><path d="M0 3.500h8L4 7.500z" fill="#222" /></svg>
        <TitleDivider $l={14} $r={6} />
        <TitleName>lightManager</TitleName>
        <WinControls>
          <Stroke w={12} h={12} d="M0 6.500h12" c="#000" s={1} />
          <Stroke w={12} h={12} d="M.5.5h11v11H.5z" c="#000" s={1} />
          <Stroke w={13} h={13} d="M.5.5l12 12M12.500.5l-12 12" c="#000" s={1} />
        </WinControls>
      </TitleBar>
      <Ribbon>
        <RibbonTab $file $w={70}>File</RibbonTab>
        <RibbonTab $w={69}>Home</RibbonTab>
        <RibbonTab $w={68}>Share</RibbonTab>
        <RibbonTab $w={63}>View</RibbonTab>
        <RibbonRight><Stroke w={13} h={8} d="M.5 1l6 6 6-6" c="#aaa" s={1.2} /><HelpDot>?</HelpDot></RibbonRight>
      </Ribbon>
      <AddressLine>
        <NavArrows>
          <Stroke w={15} h={12} d="M1 6h14M6 1L1 6l5 5" s={1.6} />
          <Gap $w={23} />
          <Stroke w={15} h={12} d="M0 6h14M9 1l5 5-5 5" c="#d0d0d0" s={1.6} />
          <Gap $w={19} />
          <Stroke w={9} h={6} d="M1 1l3.500 3.500L8 1" s={1.8} />
          <Gap $w={15} />
          <Stroke w={12} h={16} d="M6 1v15M1 6l5-5 5 5" s={1.8} />
        </NavArrows>
        <AddressBox>
          <FolderGlyph />
          <Crumb $l={12}><Stroke w={9} h={6} d="M4 .5L1 3l3 2.500M8 .5L5 3l3 2.500" s={1.1} /></Crumb>
          <Crumb $l={9} $up $ls="-0.6px">maya</Crumb>
          <Crumb $l={11}><Stroke w={5} h={9} d="M.5.5l4 4-4 4" s={1.4} /></Crumb>
          <Crumb $l={11} $up>lightManager</Crumb>
          <AddressEnd>
            <Stroke w={11} h={8} d="M1 1l4.500 5L10 1" s={2} />
            <RefreshCell>
              <svg width="14" height="15" viewBox="0 0 14 15"><path d="M10 2.500a6 6 0 1 1-6 0M1 2h4.500v4.500" fill="none" stroke="#666" strokeWidth="1.600" /></svg>
            </RefreshCell>
          </AddressEnd>
        </AddressBox>
        <SearchBox>
          Search lightManager
          <svg width="14" height="14" viewBox="0 0 14 14"><circle cx="9" cy="5" r="3.800" fill="none" stroke="#666" strokeWidth="1.600" /><path d="M6 8L.8 13" stroke="#666" strokeWidth="2" /></svg>
        </SearchBox>
      </AddressLine>
      <Panes>
        <NavPane>
          {navRows.map((r, i) => (
            <NavRow key={i} $root={r.root} $gap={r.gap} $sel={r.sel}>
              <NavIcon><r.icon /></NavIcon>
              <NavLabel>{r.label}</NavLabel>
              {r.pin && <PinSlot><PinGlyph /></PinSlot>}
            </NavRow>
          ))}
        </NavPane>
        <ListPane>
          <ColumnHeads>
            <HeadName $l={21}>Name<SortMark><Stroke w={11} h={6} d="M1 5.500l4.500-4.500L10 5.500" c="#777" s={1} /></SortMark></HeadName>
            <ColumnHead $l={7}>Date modified</ColumnHead>
            <ColumnHead $l={7} $last>Type</ColumnHead>
          </ColumnHeads>
          {[["lightFile_112715", "11/27/2019 5:44 PM"], ["lightFile_112720", "11/27/2019 5:45 PM"]].map(([n, d], i) => (
            <FileRow key={n} $sel={i === 0}>
              <NoteGlyph /><span>{n}</span><FileMeta>{d}</FileMeta><FileMeta>JSON File</FileMeta>
            </FileRow>
          ))}
          <ListFill />
          <ScrollTrack>
            <ScrollLeft><Stroke w={7} h={10} d="M6 1L2 5l4 4" c="#555" /><ScrollThumb /></ScrollLeft>
            <Stroke w={7} h={10} d="M1 1l4 4-4 4" c="#555" />
          </ScrollTrack>
        </ListPane>
      </Panes>
      <StatusBar>
        2 items
        <ViewButtons>
          <DetailsButton>
            <svg width="19" height="16" viewBox="0 0 19 16"><path d="M.5.500h4v4h-4z M.5 5.800h4v4h-4z M.5 11.200h4v4h-4z" fill="#fff" stroke="#777" /><path d="M7 2.500h5M13.500 2.500h5M7 7.800h5M13.500 7.800h5M7 13h5M13.500 13h5" stroke="#444" /></svg>
          </DetailsButton>
          <PictureGlyph />
        </ViewButtons>
      </StatusBar>
    </Explorer>
  );
}

export default function App() {
  return (
    <>
      <GlobalStyle />
      <Desktop>
        <TopEdge />
        <Workspace>
          <Outliner />
          <Viewport />
        </Workspace>
        <LightingManager />
        <WallTop />
        <WallSide />
        <FileExplorer />
        <Cursor><HandGlyph /></Cursor>
      </Desktop>
    </>
  );
}
